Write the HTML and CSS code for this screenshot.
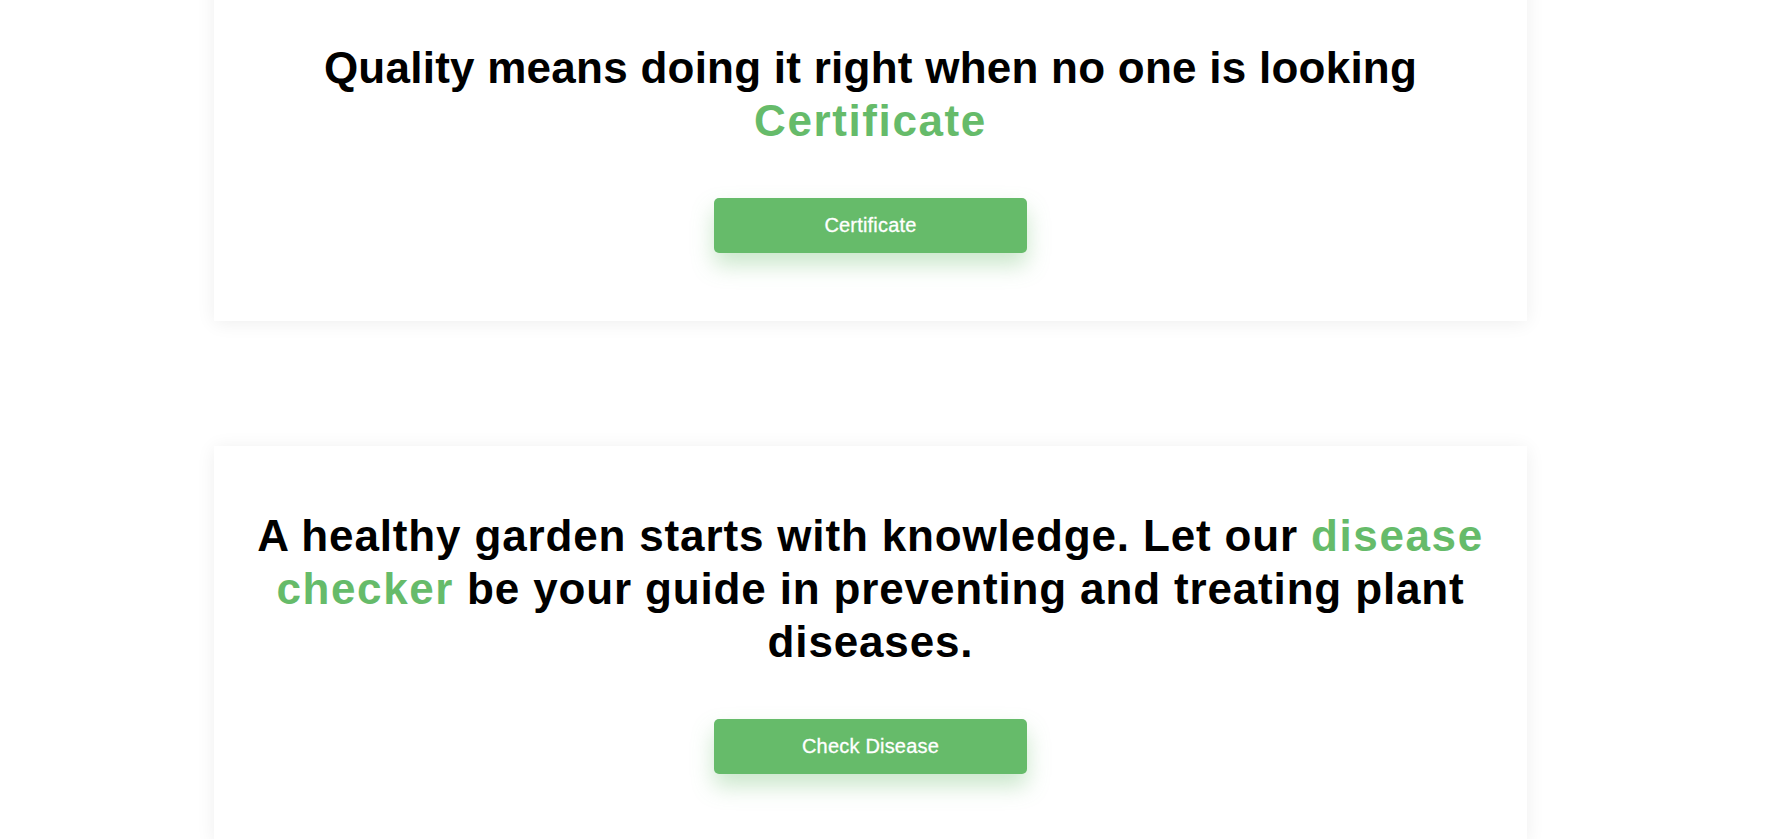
FILE: index.html
```html
<!DOCTYPE html>
<html lang="en">
<head>
<meta charset="utf-8">
<title>Garden</title>
<link rel="stylesheet" href="styles.css">
</head>
<body>
<main class="page">
  <section class="card">
    <h2 class="card-title">Quality means doing it right when no one is looking <span class="accent">Certificate</span></h2>
    <a class="btn" href="#">Certificate</a>
  </section>
  <section class="card">
    <h2 class="card-title card-title--wide">A healthy garden starts with knowledge. Let our <span class="accent">disease checker</span> be your guide in preventing and treating plant diseases.</h2>
    <a class="btn" href="#">Check Disease</a>
  </section>
</main>
</body>
</html>
```
FILE: styles.css
```css
html, body {
  margin: 0;
  padding: 0;
  background: #fff;
}
body {
  font-family: "Liberation Sans", Arial, sans-serif;
  overflow: hidden;
}
.page {
  display: flex;
  flex-direction: column;
  gap: 125px;
  margin-top: -22px;
  padding-left: 214px;
}
.card {
  width: 1313px;
  box-sizing: border-box;
  background: #fff;
  padding: 63px 30px 68px;
  box-shadow: 0 2px 18px rgba(0, 0, 0, 0.07);
  display: flex;
  flex-direction: column;
  align-items: center;
}
.card-title {
  margin: 0;
  font-size: 44px;
  line-height: 53px;
  font-weight: 700;
  letter-spacing: 0.25px;
  color: #000;
  text-align: center;
}
.card-title--wide {
  letter-spacing: 0.85px;
}
.accent {
  color: #66bb6a;
  letter-spacing: 1.6px;
}
.btn {
  margin-top: 51px;
  width: 313px;
  height: 55px;
  display: flex;
  align-items: center;
  justify-content: center;
  background: #66bb6a;
  color: #fff;
  border-radius: 5px;
  font-size: 20px;
  letter-spacing: 0.2px;
  text-decoration: none;
  -webkit-text-stroke: 0.3px #fff;
  box-shadow: 0 12px 22px rgba(102, 187, 106, 0.35);
}
```
